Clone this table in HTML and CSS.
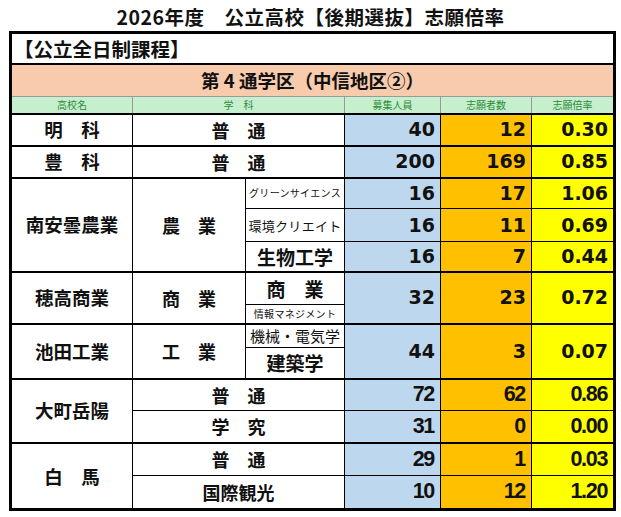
FILE: index.html
```html
<!DOCTYPE html>
<html lang="ja">
<head>
<meta charset="utf-8">
<title>志願倍率</title>
<link rel="stylesheet" href="styles.css">
</head>
<body>
<h1 class="title">2026年度　公立高校【後期選抜】志願倍率</h1>
<table class="rates">
  <colgroup>
    <col class="c1"><col class="c2"><col class="c3"><col class="c4"><col class="c5"><col class="c6">
  </colgroup>
  <tbody class="top">
    <tr class="r-course"><td colspan="6" class="course">【公立全日制課程】</td></tr>
    <tr class="r-district"><td colspan="6" class="district">第 4 通学区（中信地区②）</td></tr>
    <tr class="r-head">
      <th>高校名</th><th colspan="2">学　科</th><th>募集人員</th><th>志願者数</th><th>志願倍率</th>
    </tr>
  </tbody>
  <tbody class="grp">
    <tr class="h32">
      <td class="sch">明　科</td><td colspan="2" class="dept">普　通</td>
      <td class="num blue">40</td><td class="num orange">12</td><td class="num yellow">0.30</td>
    </tr>
  </tbody>
  <tbody class="grp">
    <tr class="h32">
      <td class="sch">豊　科</td><td colspan="2" class="dept">普　通</td>
      <td class="num blue">200</td><td class="num orange">169</td><td class="num yellow">0.85</td>
    </tr>
  </tbody>
  <tbody class="grp">
    <tr class="h31">
      <td rowspan="3" class="sch">南安曇農業</td><td rowspan="3" class="dept">農　業</td>
      <td class="sub xs">グリーンサイエンス</td>
      <td class="num blue">16</td><td class="num orange">17</td><td class="num yellow">1.06</td>
    </tr>
    <tr class="h33">
      <td class="sub s">環境クリエイト</td>
      <td class="num blue">16</td><td class="num orange">11</td><td class="num yellow">0.69</td>
    </tr>
    <tr class="h30">
      <td class="sub l">生物工学</td>
      <td class="num blue">16</td><td class="num orange">7</td><td class="num yellow">0.44</td>
    </tr>
  </tbody>
  <tbody class="grp">
    <tr class="h33">
      <td rowspan="2" class="sch">穂高商業</td><td rowspan="2" class="dept">商　業</td>
      <td class="sub l">商　業</td>
      <td rowspan="2" class="num blue">32</td><td rowspan="2" class="num orange">23</td><td rowspan="2" class="num yellow">0.72</td>
    </tr>
    <tr class="h19">
      <td class="sub xs">情報マネジメント</td>
    </tr>
  </tbody>
  <tbody class="grp">
    <tr class="h24">
      <td rowspan="2" class="sch">池田工業</td><td rowspan="2" class="dept">工　業</td>
      <td class="sub m">機械・電気学</td>
      <td rowspan="2" class="num blue">44</td><td rowspan="2" class="num orange">3</td><td rowspan="2" class="num yellow">0.07</td>
    </tr>
    <tr class="h31">
      <td class="sub l">建築学</td>
    </tr>
  </tbody>
  <tbody class="grp narrow">
    <tr class="h32">
      <td rowspan="2" class="sch">大町岳陽</td><td colspan="2" class="dept">普　通</td>
      <td class="num blue">72</td><td class="num orange">62</td><td class="num yellow">0.86</td>
    </tr>
    <tr class="h32">
      <td colspan="2" class="dept">学　究</td>
      <td class="num blue">31</td><td class="num orange">0</td><td class="num yellow">0.00</td>
    </tr>
  </tbody>
  <tbody class="grp narrow">
    <tr class="h33">
      <td rowspan="2" class="sch">白　馬</td><td colspan="2" class="dept">普　通</td>
      <td class="num blue">29</td><td class="num orange">1</td><td class="num yellow">0.03</td>
    </tr>
    <tr class="h34">
      <td colspan="2" class="dept">国際観光</td>
      <td class="num blue">10</td><td class="num orange">12</td><td class="num yellow">1.20</td>
    </tr>
  </tbody>
</table>
</body>
</html>
```

FILE: styles.css
```css
html, body {
  margin: 0;
  padding: 0;
  background: #fff;
}
body {
  font-family: "Noto Sans CJK JP", "Noto Sans", sans-serif;
  color: #111;
  width: 621px;
  height: 517px;
  overflow: hidden;
}
.title {
  margin: 0;
  height: 31px;
  line-height: 34px;
  font-size: 19.5px;
  font-weight: bold;
  text-align: center;
  letter-spacing: 0.5px;
}
.rates {
  margin-left: 9px;
  width: 604px;
  table-layout: fixed;
  border-collapse: collapse;
  border: 3px solid #000;
}
.c1 { width: 122px; }
.c2 { width: 113px; }
.c3 { width: 99px; }
.c4 { width: 96px; }
.c5 { width: 91px; }
.c6 { width: 83px; }

.rates td, .rates th {
  padding: 0;
  border: 1px solid #000;
  line-height: 1;
  vertical-align: middle;
  overflow: hidden;
  white-space: nowrap;
}
.r-course { height: 31px; }
.course {
  font-size: 19.5px;
  font-weight: bold;
  text-align: left;
  padding-left: 2px !important;
  border-bottom: 2px solid #000 !important;
}
.r-district { height: 33px; }
.district {
  background: #f8cbad;
  font-size: 18.5px;
  font-weight: bold;
  text-align: center;
  border-bottom: 1px solid #9a9a9a !important;
}
.r-head { height: 17px; }
.r-head th {
  background: #c6efce;
  color: #2e8b3a;
  font-size: 10px;
  font-weight: normal;
  border: 1px solid #9a9a9a;
  text-align: center;
}
.grp {
  border-top: 2px solid #000;
}
.h19 { height: 19px; }
.h24 { height: 24px; }
.h30 { height: 30px; }
.h31 { height: 31px; }
.h32 { height: 32px; }
.h33 { height: 33px; }
.h34 { height: 34px; }

.sch {
  font-size: 18.5px;
  font-weight: bold;
  text-align: center;
}
.dept {
  font-size: 18px;
  font-weight: bold;
  text-align: center;
}
.sub {
  text-align: center;
  font-weight: bold;
}
.sub.xs { font-size: 10px; font-weight: normal; letter-spacing: 0.3px; }
.sub.s { font-size: 13px; font-weight: normal; letter-spacing: 0.3px; }
.sub.m { font-size: 15px; font-weight: normal; }
.sub.l { font-size: 19px; }

.num {
  text-align: right;
  padding-right: 5px !important;
  font-family: "DejaVu Sans", "Noto Sans", sans-serif;
  font-size: 19px;
  font-weight: bold;
}
.narrow .num {
  font-family: "Liberation Sans", "Noto Sans", sans-serif;
  font-size: 21.5px;
  letter-spacing: -1.3px;
  font-weight: bold;
  padding-right: 6px !important;
}
.narrow .sch, .narrow .dept {
  font-weight: bold;
}
.blue { background: #bdd7ee; }
.orange { background: #ffc000; }
.yellow { background: #ffff00; }
```
